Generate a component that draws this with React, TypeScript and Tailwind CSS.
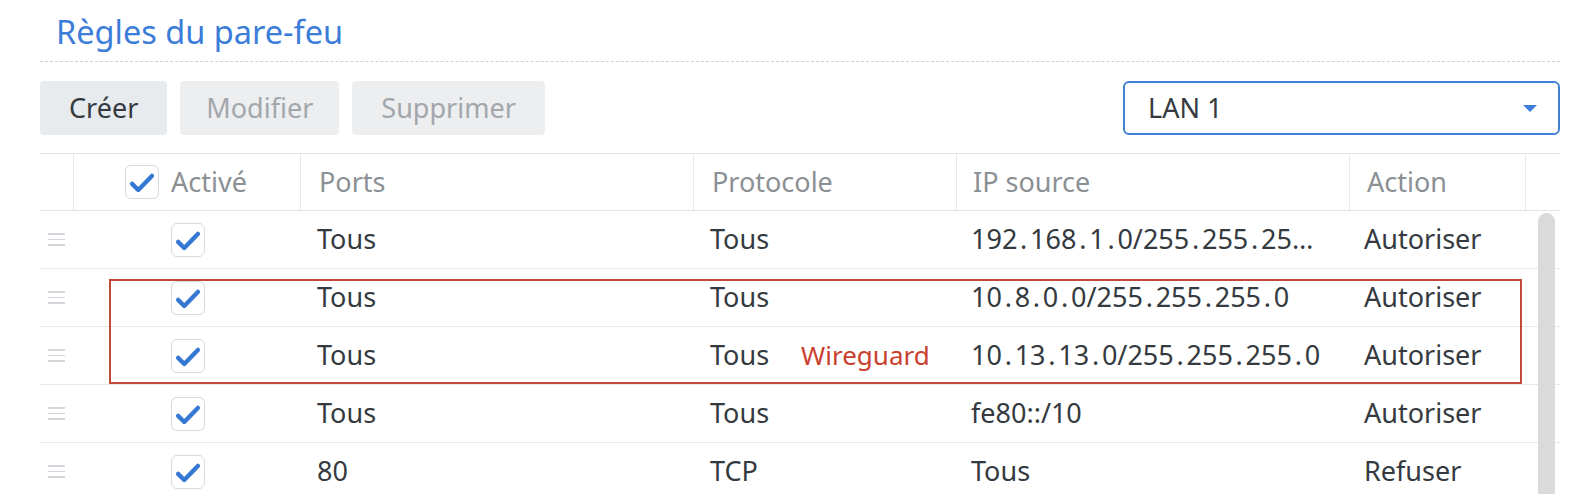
import React from "react";

type Rule = {
  ports: string;
  proto: string;
  ip: string;
  action: string;
  note?: string;
};

const rules: Rule[] = [
  { ports: "Tous", proto: "Tous", ip: "192.168.1.0/255.255.255.0", action: "Autoriser" },
  { ports: "Tous", proto: "Tous", ip: "10.8.0.0/255.255.255.0", action: "Autoriser" },
  { ports: "Tous", proto: "Tous", ip: "10.13.13.0/255.255.255.0", action: "Autoriser", note: "Wireguard" },
  { ports: "Tous", proto: "Tous", ip: "fe80::/10", action: "Autoriser" },
  { ports: "80", proto: "TCP", ip: "Tous", action: "Refuser" },
];

const cols = "grid grid-cols-[34px_227px_393px_263px_393px_176px_34px]";

function CheckBox() {
  return (
    <div className="w-[34px] h-[34px] rounded-[6px] border-[1.5px] border-[#d6dadf] bg-white flex items-center justify-center shrink-0">
      <svg width="34" height="34" viewBox="0 0 34 34">
        <path d="M6.5 19 L13 25.5 L27.5 10.5" fill="none" stroke="#3578d4" strokeWidth="4.6" strokeLinecap="round" strokeLinejoin="round" />
      </svg>
    </div>
  );
}

function DragHandle() {
  return (
    <div className="flex flex-col gap-[4px] w-[17px]">
      <span className="h-[1.5px] bg-[#d3d7db]" />
      <span className="h-[1.5px] bg-[#d3d7db]" />
      <span className="h-[1.5px] bg-[#d3d7db]" />
    </div>
  );
}

// dots in addresses are spaced wider in the source font
function Ip({ value }: { value: string }) {
  const parts = value.split(".");
  return (
    <>
      {parts.map((p, i) => (
        <React.Fragment key={i}>
          {i > 0 && <span className="mx-[2.75px]">.</span>}
          {p}
        </React.Fragment>
      ))}
    </>
  );
}

export default function App() {
  return (
    <div className="w-[1588px] h-[494px] overflow-hidden bg-white pl-[40px] pr-[28px] text-[27px] text-[#343a40]" style={{ fontFamily: '"Noto Sans", sans-serif' }}>
      {/* Title */}
      <div className="h-[62px] flex items-center pl-[16px] border-b border-dashed border-[#cdd1d5]">
        <h1 className="text-[32.5px] text-[#3b7dd8] font-normal mt-[4px]">Règles du pare-feu</h1>
      </div>

      {/* Toolbar */}
      <div className="mt-[19px] flex items-center justify-between">
        <div className="flex gap-[13px]">
          <button className="h-[54px] px-[29px] rounded-[4px] bg-[#e8ebee] text-[#343a40]">Créer</button>
          <button className="h-[54px] px-[26px] rounded-[4px] bg-[#eceef0] text-[#a3a7ab]">Modifier</button>
          <button className="h-[54px] px-[29px] rounded-[4px] bg-[#eceef0] text-[#a3a7ab]">Supprimer</button>
        </div>
        <div className="w-[437px] h-[54px] rounded-[6px] border-2 border-[#4180d4] flex items-center justify-between pl-[23px] pr-[20px]">
          <span>LAN 1</span>
          <svg width="16" height="9" viewBox="0 0 16 9">
            <path d="M1 1 L15 1 L8 8 Z" fill="#3b7dd8" />
          </svg>
        </div>
      </div>

      {/* Table */}
      <div className="mt-[18px] relative">
        <div className={`${cols} h-[58px] border-y border-[#e1e4e8] text-[#8b9095]`}>
          <div className="border-r border-[#e6e8eb]" />
          <div className="border-r border-[#e6e8eb] flex items-center gap-[12px] pl-[51px]">
            <CheckBox />
            <span>Activé</span>
          </div>
          <div className="border-r border-[#e6e8eb] flex items-center pl-[18px]">Ports</div>
          <div className="border-r border-[#e6e8eb] flex items-center pl-[18px]">Protocole</div>
          <div className="border-r border-[#e6e8eb] flex items-center pl-[16px]">IP source</div>
          <div className="border-r border-[#e6e8eb] flex items-center pl-[17px]">Action</div>
          <div />
        </div>

        {rules.map((r, i) => (
          <div key={i} className={`${cols} h-[58px] border-b border-[#e6e8eb]`}>
            <div className="flex items-center pl-[8px]">
              <DragHandle />
            </div>
            <div className="flex items-center justify-center">
              <CheckBox />
            </div>
            <div className="flex items-center pl-[16px]">{r.ports}</div>
            <div className="flex items-center pl-[16px]">
              <span>{r.proto}</span>
              {r.note && <span className="ml-[32px] text-[26px] text-[#c9402e]">{r.note}</span>}
            </div>
            <div className="flex items-center pl-[14px] pr-[26px] min-w-0">
              <span className="truncate">
                <Ip value={r.ip} />
              </span>
            </div>
            <div className="flex items-center pl-[14px]">{r.action}</div>
            <div />
          </div>
        ))}

        {/* highlight box */}
        <div className="absolute left-[69px] top-[126px] w-[1413px] h-[105px] border-2 border-[#c0493a] pointer-events-none" />

        {/* scrollbar */}
        <div className="absolute left-[1498px] top-[60px] w-[17px] h-[300px] rounded-full bg-[#dadada]" />
      </div>
    </div>
  );
}
